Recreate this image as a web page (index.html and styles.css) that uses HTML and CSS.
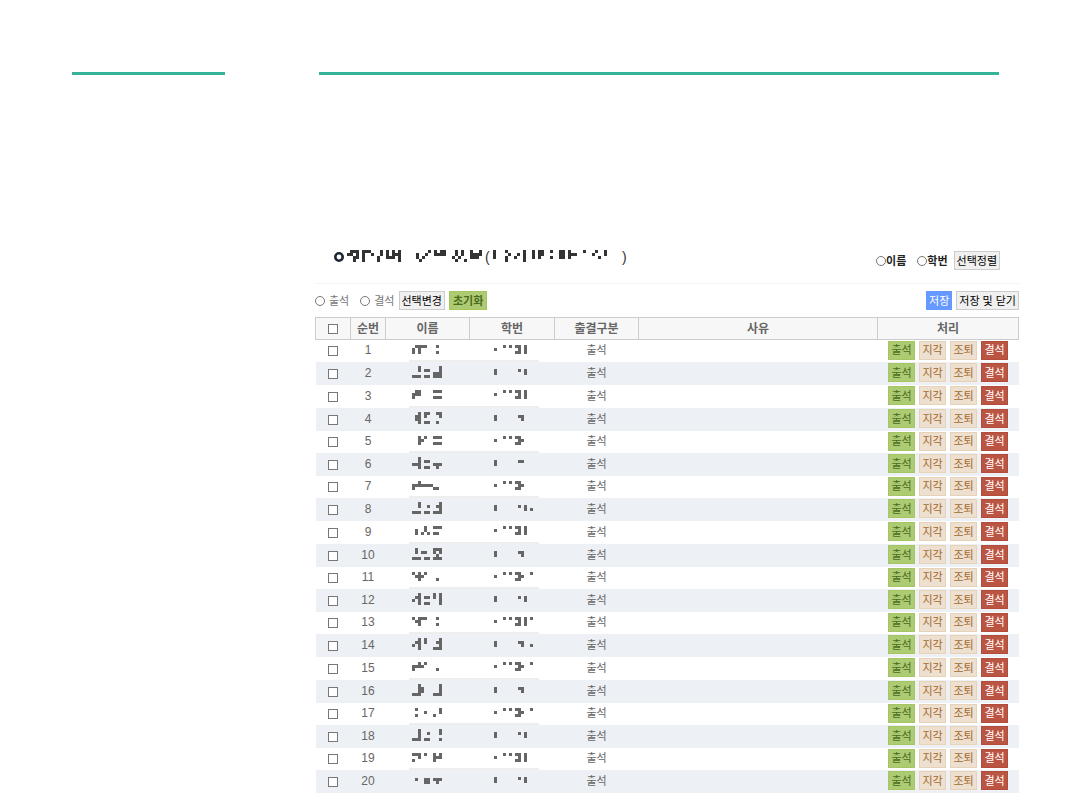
FILE: index.html
```html
<!DOCTYPE html>
<html lang="ko">
<head>
    <meta charset="UTF-8">
    <title>출석부</title>
    <link rel="stylesheet" href="styles.css">
</head>
<body>
    <div class="lines">
        <span></span>
        <span></span>
    </div>
    <div id="container">
        <div class="top">
            <h1 class="title">
                <svg class="dot" width="10" height="10" viewBox="0 0 10 10"><circle cx="5" cy="5" r="3.7" fill="#fff" stroke="#1c2634" stroke-width="2.6"/></svg>
                <span class="mosaic" data-name="title"></span><span class="paren">(</span><span class="mosaic" data-name="time"></span><span class="paren end">)</span>
            </h1>
            <div class="sort">
                <label><input type="radio" name="sort">이름</label>
                <label><input type="radio" name="sort">학번</label>
                <button type="button" class="btn">선택정렬</button>
            </div>
        </div>
        <div class="tools">
            <label><input type="radio" name="state">출석</label>
            <label><input type="radio" name="state">결석</label>
            <button type="button" class="btn">선택변경</button>
            <button type="button" class="btn reset">초기화</button>
            <button type="button" class="btn save">저장</button>
            <button type="button" class="btn">저장 및 닫기</button>
        </div>
        <table id="list">
            <thead>
                <tr>
                    <th class="check"><input type="checkbox" aria-label="전체 선택"></th>
                    <th class="num">순번</th>
                    <th class="name">이름</th>
                    <th class="code">학번</th>
                    <th class="state">출결구분</th>
                    <th>사유</th>
                    <th class="action">처리</th>
                </tr>
            </thead>
            <tbody></tbody>
        </table>
    </div>
    <script src="list.js"></script>
</body>
</html>
```
FILE: list.js
```js
// 한 칸 = 3px, '/' 는 줄바꿈
var titles = {
    title: '.###.###...#.#.#.#.........#.#.##...#.#..#..#./##.#.#..#..#.#.###.....#..#..####...#.#..####./..##.#....#..###.#.....#.#.........#.#...###./..#..#....#......#......#...........#..#......',
    time: '#...#.....#..#.##..#..##.#....#...#..#/#....#..#.#..#.##.....##.###.....#...#/#...#..#..#..#.#...#..##.#.........#../....#.....#...........................'
};
var codeA = '...#.#.##.#../#.......#.#../.......##.#..';
var codeB = '...#.#.##..../#.......##.../.......##....';
var codeA2 = '...#.#.##.#.#/#.......#.#../.......##.#..';
var codeB2 = '...#.#.##...#/#.......##.../.......##....';
var codeC = '#.......#.#../#.........#..';
var codeD = '#.......##.../#........#...';
var rows = [
    ['.####...#./#.#......./#.#.....#.', codeA],
    ['..#......#/..#.##...#/.......###/###.##.###', codeC],
    ['.##....###/###......./#......###', codeA],
    ['..#.##..##/.##.#....#/.##......./..#.##..#.', codeD],
    ['..#.#..###/..##....../..#....###', codeB],
    ['..#......./..#.##..../###....###/..#.##..#.', '#.......##.../#............'],
    ['..#......./#######.../#......##.', codeB],
    ['..#......#/..#..#..##/.........#/###.##.###', '#.......#.#../#.........#.#'],
    ['....#..###/.#..#...../.#.#.#.##.', codeA],
    ['.#.....###/.#.##..#.#/........#./###.##.###', codeD],
    ['#.#.#...../.###....../..#.....#.', codeB2],
    ['..#....#.#/.##.##.#.#/#.#......#/..#.##...#', codeC],
    ['#.###...#./.##......./..#.....#.', codeA2],
    ['..#.#....#/.##.#...##/#.#......#/..#....###', '#.......##.../#........#..#'],
    ['..#.#...../####....../#.......#.', codeB2],
    ['..#......#/..##.....#/..##.....#/###....###', codeD],
    ['.#.......#/....#....#/.#.....#..', codeB2],
    ['..#......#/..#..#...#/..#......./###.##...#', codeC],
    ['###.#..#.#/..#....###/#......#..', codeA],
    ['........../.#..##.###/....##..#.', codeC]
];

function mosaic(map) {
    var lines = map.split('/');
    var w = lines[0].length * 3;
    var h = lines.length * 3;
    var d = '';
    for (var y = 0; y < lines.length; y++) {
        for (var x = 0; x < lines[y].length; x++) {
            if (lines[y].charAt(x) == '#') {
                d += 'M' + x * 3 + ' ' + y * 3 + 'h3v3h-3z';
            }
        }
    }
    return '<svg width="' + w + '" height="' + h + '" viewBox="0 0 ' + w + ' ' + h + '" shape-rendering="crispEdges"><path fill="currentColor" d="' + d + '"/></svg>';
}

var aMosaic = document.querySelectorAll('.mosaic');
for (var i = 0; i < aMosaic.length; i++) {
    aMosaic[i].innerHTML = mosaic(titles[aMosaic[i].getAttribute('data-name')]);
}

var html = '';
for (var i = 0; i < rows.length; i++) {
    html += '<tr>' +
        '<td><input type="checkbox" aria-label="' + (i + 1) + '번 선택"></td>' +
        '<td>' + (i + 1) + '</td>' +
        '<td class="name">' + mosaic(rows[i][0]) + '</td>' +
        '<td class="code">' + mosaic(rows[i][1]) + '</td>' +
        '<td>출석</td>' +
        '<td></td>' +
        '<td><div class="btns">' +
        '<button type="button" class="green">출석</button>' +
        '<button type="button">지각</button>' +
        '<button type="button">조퇴</button>' +
        '<button type="button" class="red">결석</button>' +
        '</div></td></tr>';
}
document.querySelector('#list tbody').innerHTML = html;
```
FILE: styles.css
```css
*{
    margin:0;
    padding:0;
    box-sizing: border-box;
}
body{
    background: #fff;
    color: #666;
    font: 11px/16px "Liberation Sans", "Noto Sans CJK KR", sans-serif;
}
button{
    font: inherit;
    white-space: nowrap;
    cursor: pointer;
}
input[type=radio],input[type=checkbox]{
    appearance: none;
    display: block;
    width: 10px;
    height: 10px;
    background: #fff;
    border: 1px solid #777;
}
input[type=radio]{
    border-radius: 50%;
}
input:checked{
    background: #666;
}
.lines{
    display: grid;
    grid-template-columns: 153px 1fr;
    column-gap: 94px;
    padding: 72px 81px 0 72px;
}
.lines span{
    height: 3px;
    background: #34b39a;
}
#container{
    margin: 163px 61px 0 315px;
}
.top{
    display: flex;
    justify-content: space-between;
    height: 46px;
    border-bottom: 1px solid #f3f3f3;
}
.title{
    display: flex;
    align-items: flex-start;
    padding: 12px 0 0 19px;
    color: #333;
    font-size: 14px;
    font-weight: normal;
}
.title svg{
    display: block;
}
.title .dot{
    margin: 2px 3px 0 0;
}
.paren{
    width: 8px;
    line-height: 14px;
}
.paren.end{
    margin-left: 15px;
}
.sort{
    display: flex;
    align-items: center;
    height: 19px;
    margin: 13px 19px 0 0;
    color: #222;
}
.sort label,.tools label{
    display: flex;
    align-items: center;
}
.sort label{
    margin-right: 11px;
    font-weight: bold;
}
.sort label:nth-child(2){
    margin-right: 6px;
}
.btn{
    height: 19px;
    padding: 0 2px;
    background: #f0f0f0;
    border: 1px solid #ccc;
    color: #000;
    line-height: 14px;
}
.tools{
    display: flex;
    align-items: center;
    padding: 7px 0;
}
.tools label{
    gap: 4px;
    margin-right: 11px;
    color: #777;
}
.tools label:nth-child(2){
    margin-right: 4px;
}
.tools .btn + .btn{
    margin-left: 4px;
}
.tools .reset{
    padding: 0 3px;
    background: #adcb73;
    border-color: #a5c560;
    color: #4a6a1c;
    font-weight: bold;
}
.tools .btn.save{
    margin-left: auto;
    background: #6699ff;
    border-color: #6699ff;
    color: #fff;
}
#list{
    width: 100%;
    table-layout: fixed;
    border-collapse: separate;
    border-spacing: 0;
    text-align: center;
}
#list th{
    height: 23px;
    background: #f7f7f7;
    border: solid #ccc;
    border-width: 1px 1px 1px 0;
    font-size: 12px;
    line-height: 18px;
}
#list th:first-child{
    border-left-width: 1px;
}
#list .check{
    width: 36px;
}
#list .num{
    width: 35px;
}
#list .name,#list .state{
    width: 84px;
}
#list .code{
    width: 85px;
}
#list .action{
    width: 141px;
}
#list input,#list td svg{
    display: block;
    margin: 0 auto;
}
#list td{
    height: 22px;
    padding: 0 1px 2px 0;
}
#list tbody tr:nth-child(even) td,#list tbody tr:nth-child(6n+3) td{
    height: 23px;
}
#list tbody tr:nth-child(even) td{
    background: #edf0f5;
}
#list td:first-child{
    border-left: 1px solid #fff;
    padding: 0 2px 0 0;
}
#list td:nth-child(2){
    font-size: 12px;
}
#list tbody tr:nth-child(odd) .name,#list tbody tr:nth-child(odd) .code{
    background: linear-gradient(#eee, #eee) right bottom / 61px 2px no-repeat;
}
#list tbody tr:nth-child(odd) .code{
    background-position: left bottom;
    background-size: 69px 2px;
}
#list td.name{
    padding: 0 2px 4px 0;
}
#list td.code{
    padding-bottom: 4px;
}
#list td.code svg{
    margin-left: 24px;
}
.btns{
    display: flex;
    justify-content: center;
    gap: 4px;
}
.btns button{
    width: 27px;
    height: 19px;
    background: #eee0d0;
    border: 1px solid #e8d2b6;
    color: #a2692c;
    line-height: 14px;
}
.btns .green{
    background: #adcb73;
    border-color: #a5c560;
    color: #4a6a1c;
}
.btns .red{
    background: #bb5543;
    border-color: #b44c3b;
    color: #fff;
}
```
